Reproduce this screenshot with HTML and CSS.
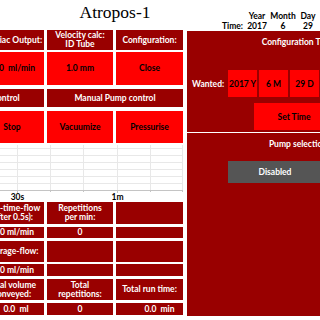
FILE: index.html
```html
<!DOCTYPE html>
<html>
<head>
<meta charset="utf-8">
<link rel="stylesheet" href="styles.css">
</head>
<body>
<div class="app">
  <header class="top">
    <h1 class="title">Atropos-1</h1>
    <div class="clock">
      <span></span><span>Year</span><span>Month</span><span>Day</span>
      <span class="lbl">Time:</span><span>2017</span><span>6</span><span>29</span>
    </div>
  </header>
  <main class="main">
    <section class="left">
      <div class="row r1">
        <div class="cell dark"></div>
        <div class="cell dark">Cardiac Output:</div>
        <div class="cell dark">Velocity calc:<br>ID Tube</div>
        <div class="cell dark">Configuration:</div>
      </div>
      <div class="row r2">
        <div class="cell red"></div>
        <div class="cell red shift-s">0.0 &nbsp;ml/min</div>
        <div class="cell red">1.0 mm</div>
        <div class="cell red">Close</div>
      </div>
      <div class="row r3">
        <div class="cell dark span2 shift-l">Automatic control</div>
        <div class="cell dark span2">Manual Pump control</div>
      </div>
      <div class="row r4">
        <div class="cell red">Start</div>
        <div class="cell red">Stop</div>
        <div class="cell red">Vacuumize</div>
        <div class="cell red">Pressurise</div>
      </div>
      <div class="chart">
        <svg width="270" height="57" viewBox="0 0 270 57">
          <g class="grid">
            <line x1="0" y1="3.5" x2="270" y2="3.5"/>
            <line x1="0" y1="10.5" x2="270" y2="10.5"/>
            <line x1="0" y1="17.5" x2="270" y2="17.5"/>
            <line x1="0" y1="24.5" x2="270" y2="24.5"/>
            <line x1="0" y1="31.5" x2="270" y2="31.5"/>
            <line x1="0" y1="38.5" x2="270" y2="38.5"/>
            <line x1="4.5" y1="0" x2="4.5" y2="45"/>
            <line x1="37.5" y1="0" x2="37.5" y2="45"/>
            <line x1="70.5" y1="0" x2="70.5" y2="45"/>
            <line x1="104.5" y1="0" x2="104.5" y2="45"/>
            <line x1="137.5" y1="0" x2="137.5" y2="45"/>
            <line x1="170.5" y1="0" x2="170.5" y2="45"/>
            <line x1="204.5" y1="0" x2="204.5" y2="45"/>
            <line x1="237.5" y1="0" x2="237.5" y2="45"/>
            <line x1="269.5" y1="0" x2="269.5" y2="45"/>
          </g>
          <g class="axis">
            <line x1="0" y1="45.5" x2="270" y2="45.5"/>
            <line x1="104.5" y1="45" x2="104.5" y2="48"/>
            <line x1="137.5" y1="45" x2="137.5" y2="47"/>
            <line x1="170.5" y1="45" x2="170.5" y2="47"/>
            <line x1="204.5" y1="45" x2="204.5" y2="48"/>
            <line x1="237.5" y1="45" x2="237.5" y2="47"/>
            <line x1="269.5" y1="45" x2="269.5" y2="47"/>
          </g>
          <text x="104.5" y="55">30s</text>
          <text x="204.5" y="55">1m</text>
        </svg>
      </div>
      <div class="row ra">
        <div class="cell dark c1">Real-time-flow<br>(after 0.5s):</div>
        <div class="cell dark">Repetitions<br>per min:</div>
        <div class="cell dark"></div>
      </div>
      <div class="row rb">
        <div class="cell dark c1 shift-s">0.0 ml/min</div>
        <div class="cell dark">0</div>
        <div class="cell dark"></div>
      </div>
      <div class="row rc">
        <div class="cell dark c1">Average-flow:</div>
        <div class="cell dark"></div>
        <div class="cell dark"></div>
      </div>
      <div class="row rd">
        <div class="cell dark c1 shift-s">0.0 ml/min</div>
        <div class="cell dark"></div>
        <div class="cell dark"></div>
      </div>
      <div class="row re">
        <div class="cell dark c1">Total volume<br>conveyed:</div>
        <div class="cell dark">Total<br>repetitions:</div>
        <div class="cell dark">Total run time:</div>
      </div>
      <div class="row rf">
        <div class="cell dark c1 shift">0.0 &nbsp;ml</div>
        <div class="cell dark">0</div>
        <div class="cell dark shift2">0.0 &nbsp;min</div>
      </div>
    </section>
    <aside class="right">
      <div class="panel cfg">
        <div class="ptitle">Configuration Time</div>
        <div class="wanted">
          <span class="wlabel">Wanted:</span>
          <div class="box">2017 Y</div>
          <div class="box">6 M</div>
          <div class="box">29 D</div>
        </div>
        <div class="btn settime">Set Time</div>
      </div>
      <div class="panel pump">
        <div class="ptitle">Pump selection</div>
        <div class="btn disabled">Disabled</div>
      </div>
    </aside>
  </main>
</div>
</body>
</html>
```
FILE: styles.css
```css
html, body {
  margin: 0;
  padding: 0;
  overflow: hidden;
  background: #ffffff;
}
body {
  width: 320px;
  height: 320px;
  font-family: Lato, "Liberation Sans", sans-serif;
  font-weight: 700;
  font-size: 8.5px;
  color: #000;
}
.app {
  width: 320px;
}
.top {
  display: flex;
  height: 30px;
}
.title {
  margin: 2px 0 0 47px;
  width: 136px;
  flex-shrink: 0;
  text-align: center;
  font-family: "Liberation Serif", serif;
  font-weight: 400;
  font-size: 17.5px;
  line-height: 20px;
}
.clock {
  margin-left: 22px;
  padding-top: 11px;
  display: grid;
  grid-template-columns: 40px 24px 28px 22px;
  grid-auto-rows: 10px;
  line-height: 10px;
  text-align: center;
  flex-shrink: 0;
}
.clock .lbl {
  text-align: right;
  padding-right: 2px;
}
.main {
  display: flex;
  gap: 4px;
}
.left {
  margin-left: -87px;
  width: 270px;
  flex-shrink: 0;
  display: flex;
  flex-direction: column;
}
.row {
  display: grid;
  grid-template-columns: 64px 64px 66px 67px;
  column-gap: 3px;
}
.cell {
  display: flex;
  align-items: center;
  justify-content: center;
  text-align: center;
  line-height: 9px;
  overflow: hidden;
  white-space: nowrap;
}
.dark {
  background: #990000;
  color: #ffffff;
}
.red {
  background: #ff0000;
  color: #000000;
}
.span2 {
  grid-column: span 2;
}
.c1 {
  grid-column-start: 2;
}
.shift {
  padding-left: 8px;
}
.shift-s {
  padding-left: 3px;
}
.shift-l {
  padding-left: 14px;
}
.shift2 {
  padding-left: 20px;
}
.r1 { height: 20px; }
.r2 { height: 33px; margin-top: 2px; }
.r3 { height: 18px; margin-top: 4px; }
.r4 { height: 32px; margin-top: 4px; }
.chart {
  margin-top: 2px;
  height: 57px;
}
.chart svg {
  display: block;
}
.grid line {
  stroke: #e8e8e8;
  stroke-width: 1;
}
.axis line {
  stroke: #c4c4c4;
  stroke-width: 1;
}
.chart text {
  font-family: Lato, "Liberation Sans", sans-serif;
  font-weight: 700;
  font-size: 8.5px;
  fill: #000;
  text-anchor: middle;
}
.ra { height: 22px; }
.rb { height: 11px; margin-top: 3px; }
.rc { height: 21px; margin-top: 3px; }
.rd { height: 12px; margin-top: 2px; }
.re { height: 21px; margin-top: 3px; }
.rf { height: 12px; margin-top: 3px; }
.right {
  margin-top: 1px;
  width: 230px;
  flex-shrink: 0;
  display: flex;
  flex-direction: column;
  gap: 1px;
}
.panel {
  background: #990000;
  color: #ffffff;
  display: flex;
  flex-direction: column;
}
.cfg {
  height: 101px;
}
.pump {
  height: 183px;
}
.ptitle {
  padding-top: 6px;
  padding-right: 8px;
  height: 11px;
  line-height: 11px;
  text-align: center;
}
.wanted {
  margin-top: 22px;
  height: 27px;
  display: flex;
  align-items: center;
  gap: 2px;
}
.wlabel {
  width: 34px;
  padding-left: 5px;
  flex-shrink: 0;
}
.box {
  width: 29px;
  height: 27px;
  flex-shrink: 0;
  background: #ff0000;
  color: #000;
  display: flex;
  align-items: center;
  justify-content: center;
}
.btn {
  display: flex;
  align-items: center;
  justify-content: center;
  flex-shrink: 0;
}
.settime {
  margin: 6px 0 0 67px;
  width: 80px;
  height: 27px;
  background: #ff0000;
  color: #000;
}
.disabled {
  margin: 11px 0 0 41px;
  width: 94px;
  height: 22px;
  background: #555555;
  color: #ffffff;
}
```
